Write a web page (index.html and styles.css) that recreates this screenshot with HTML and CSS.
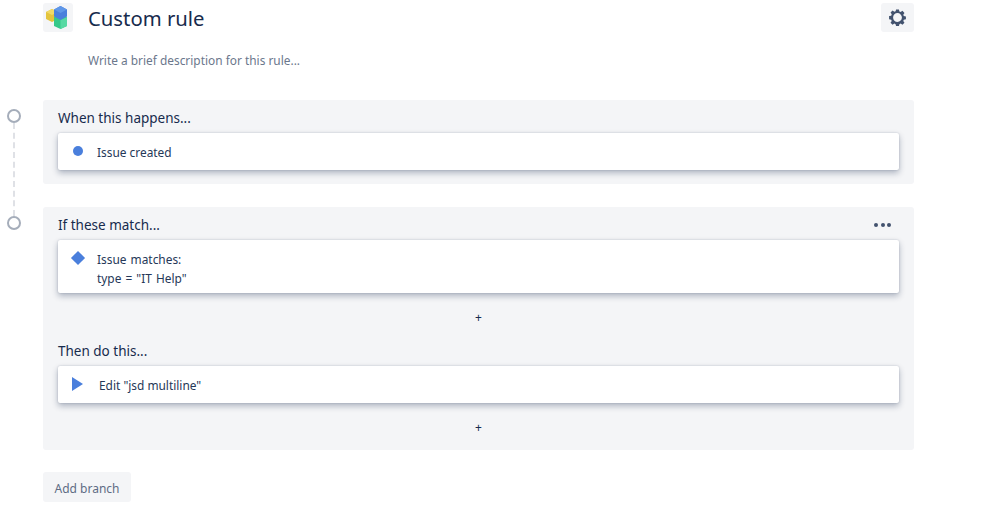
FILE: index.html
```html
<!DOCTYPE html>
<html lang="en">
<head>
    <meta charset="UTF-8">
    <meta name="viewport" content="width=device-width, initial-scale=1.0">
    <title>Custom rule</title>
    <link rel="stylesheet" href="styles.css">
</head>
<body>
    <div class="page">
        <header class="rule-header">
            <div class="rule-icon">
                <svg width="30" height="29" viewBox="0 0 30 29">
                    <path d="M3 9l6-3 6 3v7l-6 3-6-3z" fill="#e4c53e"/>
                    <path d="M3 9l6-3 6 3-6 3z" fill="#f0da68"/>
                    <path d="M11 14l6.500-3 6.500 3v9l-6.500 3-6.500-3z" fill="#36c98a"/>
                    <path d="M17.500 26v-9l6.500-3v9z" fill="#57d9a3"/>
                    <path d="M11 6.500l6.500-3.500 6.500 3.500v7l-6.500 3.500-6.500-3.500z" fill="#4a80dc"/>
                    <path d="M11 6.500l6.500-3.500 6.500 3.500-6.500 3.500z" fill="#5f97e8"/>
                </svg>
            </div>
            <h1 class="rule-title">Custom rule</h1>
            <button class="settings-btn" aria-label="Settings">
                <svg width="17" height="17" viewBox="0 0 20 20">
                    <path fill="#42526e" fill-rule="evenodd" d="M8.300 .500h3.400l.5 2.500 1.500.6 2.100-1.400 2.400 2.400-1.400 2.100.6 1.500 2.500.5v3.400l-2.500.5-.6 1.500 1.400 2.100-2.400 2.400-2.100-1.400-1.500.6-.5 2.500H8.300l-.5-2.500-1.500-.6-2.100 1.400-2.400-2.400 1.400-2.100-.6-1.500-2.500-.5V8.300l2.500-.5.6-1.500-1.400-2.100 2.400-2.400 2.100 1.400 1.500-.6zM10 4.800a5.200 5.200 0 1 0 0 10.400 5.200 5.200 0 0 0 0-10.400z"/>
                </svg>
            </button>
        </header>
        <p class="rule-desc">Write a brief description for this rule...</p>

        <div class="flow">
            <span class="rail-line"></span>

            <section class="panel panel-trigger">
                <span class="rail-dot"></span>
                <h2 class="panel-title">When this happens...</h2>
                <div class="card">
                    <span class="card-icon"><span class="dot"></span></span>
                    <span>Issue created</span>
                </div>
            </section>

            <section class="panel panel-actions">
                <span class="rail-dot"></span>
                <div class="panel-head">
                    <h2 class="panel-title">If these match...</h2>
                    <div class="more"><span></span><span></span><span></span></div>
                </div>
                <div class="card card-tall">
                    <span class="card-icon"><span class="diamond"></span></span>
                    <span>Issue matches:<br>type = "IT Help"</span>
                </div>
                <div class="add-row">+</div>

                <h2 class="panel-title">Then do this...</h2>
                <div class="card">
                    <span class="card-icon"><span class="play"></span></span>
                    <span class="card-text-edit">Edit "jsd multiline"</span>
                </div>
                <div class="add-row">+</div>
            </section>

            <button class="add-branch">Add branch</button>
        </div>
    </div>
</body>
</html>
```

FILE: styles.css
```css
body {
    margin: 0;
    background: #fff;
    color: #172b4d;
    font-family: "Noto Sans", sans-serif;
}

.page {
    width: 871px;
    padding: 3px 0 0 43px;
}

/* top row */
.rule-header {
    display: flex;
    align-items: flex-start;
}

.rule-icon {
    width: 30px;
    height: 29px;
    background: #f4f5f7;
    border-radius: 3px;
}

.rule-title {
    flex: 1;
    margin: 0 0 0 15px;
    font-size: 20.300px;
    line-height: 30px;
    font-weight: 400;
}

.settings-btn {
    width: 33px;
    height: 29px;
    padding: 0;
    border: none;
    border-radius: 3px;
    background: #f4f5f7;
    display: flex;
    align-items: center;
    justify-content: center;
}

.rule-desc {
    margin: 16px 0 0 45px;
    font-size: 11.900px;
    line-height: 22px;
    color: #6b778c;
}

/* rule flow */
.flow {
    position: relative;
    margin-top: 29px;
}

.rail-line {
    position: absolute;
    left: -30px;
    top: 23px;
    height: 93px;
    border-left: 2px dashed #dfe1e6;
}

.rail-dot {
    position: absolute;
    left: -36px;
    top: 9px;
    width: 10px;
    height: 10px;
    background: #fff;
    border: 2px solid #a5adba;
    border-radius: 50%;
}

.panel {
    position: relative;
    padding: 8px 15px 0;
    background: #f4f5f7;
    border-radius: 3px;
}

.panel-trigger {
    height: 76px;
}

.panel-actions {
    height: 235px;
    margin-top: 23px;
}

.panel-head {
    display: flex;
    justify-content: space-between;
    align-items: center;
}

.panel-title {
    margin: 0;
    font-size: 13.500px;
    line-height: 20px;
    font-weight: 400;
}

.more {
    display: flex;
    gap: 2.500px;
    margin-right: 8px;
}

.more span {
    width: 4px;
    height: 4px;
    background: #42526e;
    border-radius: 50%;
}

.card {
    display: flex;
    align-items: center;
    box-sizing: border-box;
    height: 37px;
    margin-top: 5px;
    padding-top: 2px;
    background: #fff;
    border-radius: 2px;
    font-size: 11.900px;
    line-height: 19px;
    color: #253858;
    box-shadow: 0 3px 6px rgba(9, 30, 66, 0.3), 0 0 2px rgba(9, 30, 66, 0.2);
}

.card-tall {
    height: 53px;
    padding-top: 4px;
    word-spacing: 1px;
}

.card-icon {
    flex: none;
    width: 39px;
    display: flex;
    justify-content: center;
    margin-bottom: 3px;
}

.card-tall .card-icon {
    align-self: flex-start;
    margin-top: 9px;
}

.dot {
    width: 10px;
    height: 10px;
    background: #4a7fdc;
    border-radius: 50%;
}

.diamond {
    width: 10px;
    height: 10px;
    background: #4a7fdc;
    transform: rotate(45deg);
}

.play {
    width: 0;
    height: 0;
    border-left: 11px solid #4a7fdc;
    border-top: 7px solid transparent;
    border-bottom: 7px solid transparent;
}

.card-text-edit {
    margin-left: 2px;
}

.add-row {
    height: 48px;
    display: flex;
    align-items: center;
    justify-content: center;
    font-size: 12px;
}

.add-branch {
    display: block;
    width: 88px;
    height: 30px;
    margin-top: 22px;
    padding: 2px 0 0;
    border: none;
    border-radius: 3px;
    background: #f4f5f7;
    color: #5e6c84;
    font-family: inherit;
    font-size: 12px;
}
```
